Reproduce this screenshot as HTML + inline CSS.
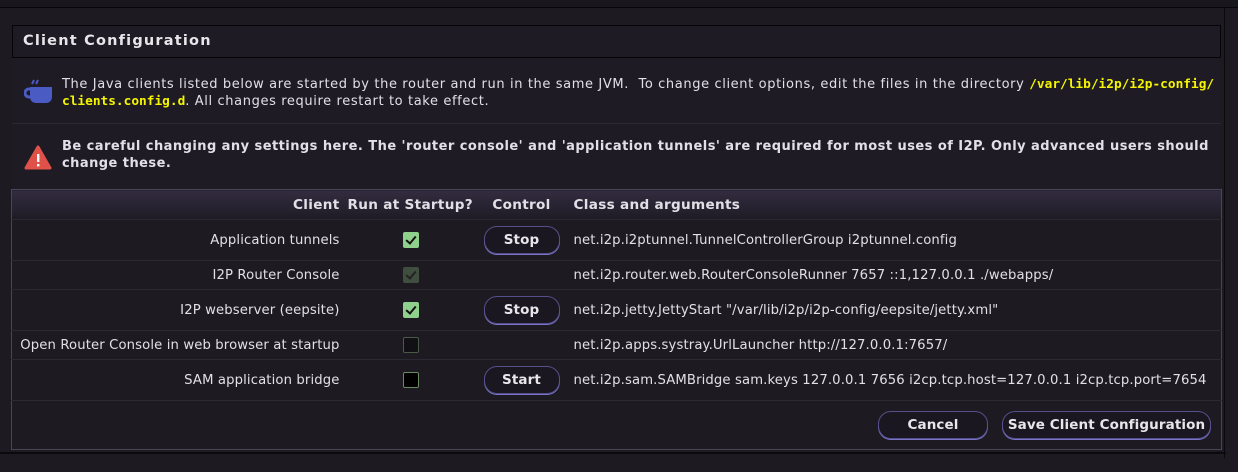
<!DOCTYPE html>
<html><head><meta charset="utf-8"><style>
*{box-sizing:border-box;margin:0;padding:0}
body{width:1238px;height:472px;background:#1d1a22;font-family:"DejaVu Sans",Verdana,sans-serif;font-size:13px;color:#e2e0e6;position:relative;overflow:hidden}
.top{position:absolute;left:0;top:0;width:1238px;height:8px;background:#19161d;border-bottom:1px solid #08070a}
.rb{position:absolute;left:1224px;top:8px;width:1px;height:450px;background:#0a090c}
.bot{position:absolute;left:0;top:452px;width:1226px;height:2px;background:#0a090c}
.hdr{position:absolute;left:12px;top:25px;width:1209px;height:33px;border:1px solid #050406;background:#1e1b24;font-weight:bold;font-size:14.5px;letter-spacing:1.2px;padding:7px 10px;color:#e8e6ea}
.sec{position:absolute;left:12px;width:1209px;background:#1e1b24;border-bottom:1px solid #2c2932}
.sec p{position:absolute;left:50px;right:4px;line-height:17px}
code{font-family:"DejaVu Sans Mono",monospace;font-weight:bold;color:#f5f500;font-size:12.8px;letter-spacing:0;white-space:nowrap}
table{position:absolute;left:11px;top:189px;width:1211px;border-collapse:collapse;border:1px solid #4a4556;font-size:13.2px;letter-spacing:.13px;table-layout:fixed;white-space:nowrap}
th{height:30px;font-weight:bold;text-align:left;background:linear-gradient(#322c40,#1e1b24);border-bottom:1px solid #2c2932;padding:0 6px;font-size:13.6px;letter-spacing:.3px;overflow:visible}
td{border-bottom:1px solid #2c2932;padding:0 6px;overflow:visible}
.r1 td{height:41px}.r2 td{height:29px}
.c1{text-align:right;width:334px}
.c2{text-align:center;width:130px}
.c3{text-align:center;width:92px}
.cb{display:inline-block;width:16px;height:16px;border-radius:2px;vertical-align:middle;position:relative}
.on{background:#8fd08c}.dis{background:#3f4e3e}.off{background:#111014;border:1px solid #4a5a48}.off2{background:#000;border:1px solid #6a8a66}
.on:after,.dis:after{content:"";position:absolute;left:5px;top:2px;width:4px;height:8px;border:solid #111;border-width:0 2px 2px 0;transform:rotate(40deg)}
.dis:after{border-color:#222}
.btn{display:inline-block;width:76px;height:28px;line-height:27px;border:1px solid #55508a;border-radius:13px;box-shadow:0 1px 0 #7a74c8;font-weight:bold;font-size:13.5px;letter-spacing:.1px;color:#e8e6ea;background:#1a1720;text-align:center;vertical-align:middle;white-space:nowrap}
.foot td{height:49px;border-bottom:none;text-align:right;padding-right:10px}
</style></head><body>
<div class="top"></div><div class="rb"></div><div class="bot"></div>
<div class="hdr">Client Configuration</div>
<div class="sec" style="top:58px;height:66px">
<svg style="position:absolute;left:12px;top:20px" width="30" height="28" viewBox="0 0 30 28"><path d="M10 2l-2 4M14 2l-2 4" stroke="#4a5bc4" stroke-width="2"/><path d="M6 9h22v10c0 4-3 6-6 6h-10c-3 0-6-2-6-6z" fill="#4a5bc4"/><circle cx="5" cy="15" r="4" fill="none" stroke="#4a5bc4" stroke-width="3"/></svg>
<p style="top:18px;letter-spacing:.62px;white-space:nowrap">The Java clients listed below are started by the router and run in the same JVM.&nbsp; To change client options, edit the files in the directory <code>/var/lib/i2p/i2p-config/</code><br><code>clients.config.d</code>. All changes require restart to take effect.</p></div>
<div class="sec" style="top:124px;height:65px;border-bottom:none">
<svg style="position:absolute;left:12px;top:21px" width="28" height="26" viewBox="0 0 28 26"><path d="M14 2L26 23H2z" fill="#e0514a" stroke="#e0514a" stroke-width="3" stroke-linejoin="round"/><rect x="13" y="9" width="2.4" height="8" fill="#fff"/><rect x="13" y="19" width="2.4" height="2.4" fill="#fff"/></svg>
<p style="top:14px;font-weight:bold;letter-spacing:.45px;white-space:nowrap">Be careful changing any settings here. The 'router console' and 'application tunnels' are required for most uses of I2P. Only advanced users should<br>change these.</p></div>
<table>
<tr><th class="c1" style="text-align:right">Client</th><th class="c2" style="text-align:left;padding-left:2px">Run at Startup?</th><th class="c3">Control</th><th>Class and arguments</th></tr>
<tr class="r1"><td class="c1">Application tunnels</td><td class="c2"><span class="cb on"></span></td><td class="c3"><span class="btn">Stop</span></td><td>net.i2p.i2ptunnel.TunnelControllerGroup i2ptunnel.config</td></tr>
<tr class="r2"><td class="c1">I2P Router Console</td><td class="c2"><span class="cb dis"></span></td><td class="c3"></td><td>net.i2p.router.web.RouterConsoleRunner 7657 ::1,127.0.0.1 ./webapps/</td></tr>
<tr class="r1"><td class="c1">I2P webserver (eepsite)</td><td class="c2"><span class="cb on"></span></td><td class="c3"><span class="btn">Stop</span></td><td>net.i2p.jetty.JettyStart "/var/lib/i2p/i2p-config/eepsite/jetty.xml"</td></tr>
<tr class="r2"><td class="c1">Open Router Console in web browser at startup</td><td class="c2"><span class="cb off"></span></td><td class="c3"></td><td>net.i2p.apps.systray.UrlLauncher http://127.0.0.1:7657/</td></tr>
<tr class="r1" style="border-bottom:1px solid #4a4556"><td class="c1">SAM application bridge</td><td class="c2"><span class="cb off2"></span></td><td class="c3"><span class="btn">Start</span></td><td>net.i2p.sam.SAMBridge sam.keys 127.0.0.1 7656 i2cp.tcp.host=127.0.0.1 i2cp.tcp.port=7654</td></tr>
<tr class="foot"><td colspan="4"><span class="btn" style="width:110px;margin-right:14px">Cancel</span><span class="btn" style="width:209px">Save Client Configuration</span></td></tr>
</table>
</body></html>
